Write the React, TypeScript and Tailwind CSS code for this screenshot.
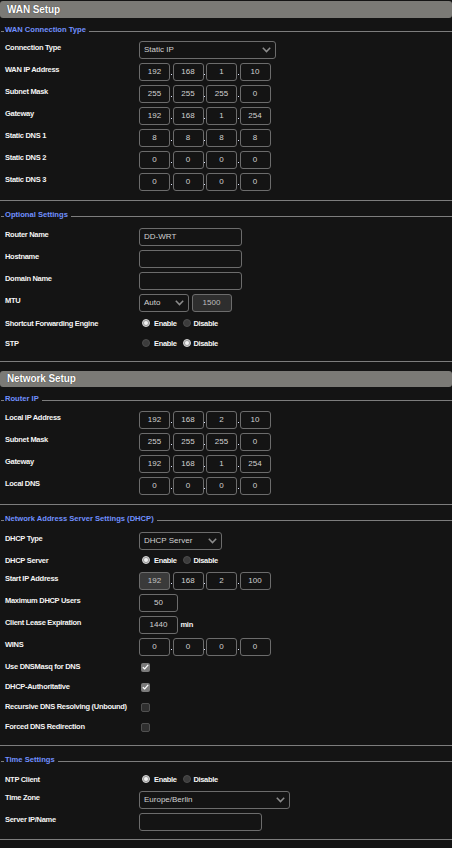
import React from "react";

const LINE = "bg-[#7d7d7d]";

function Header({ title, tall }: { title: string; tall?: boolean }) {
  return (
    <div
      className={`${tall ? "h-[17px]" : "h-[16px]"} bg-[#7b7a76] rounded-[3px] flex items-center pl-[7px]`}
    >
      <span className="text-white font-bold text-[10px] tracking-[-0.1px] leading-none [text-shadow:0_0_1px_rgba(0,0,0,0.7)]">
        {title}
      </span>
    </div>
  );
}

function Legend({ text }: { text: string }) {
  return (
    <div className="flex items-start h-[10px]">
      <div className={`w-[3px] h-px ${LINE} mt-[6px] ml-[1px]`} />
      <span className="ml-[1px] text-[#7190ff] font-bold text-[7.6px] leading-[10px] whitespace-nowrap">
        {text}
      </span>
      <div className={`flex-1 h-px ${LINE} mt-[6px] ml-[3px]`} />
    </div>
  );
}

function Bottom() {
  return <div className={`h-px ${LINE}`} />;
}

const LABEL =
  "w-[139px] shrink-0 pl-[5px] text-[7.5px] leading-[8px] font-bold text-[#f4f4f4] tracking-[-0.3px] whitespace-nowrap";

function Row({ label, children }: { label: string; children?: React.ReactNode }) {
  return (
    <div className="flex h-[22px]">
      <div className={`${LABEL} pt-[2.5px]`}>{label}</div>
      <div className="flex items-start">{children}</div>
    </div>
  );
}

function IP({ v, gray }: { v: string[]; gray?: boolean }) {
  return (
    <div className="flex">
      {v.map((x, i) => (
        <React.Fragment key={i}>
          {i > 0 && (
            <div className="w-[2.5px] h-[18px] flex flex-col justify-end items-center pb-[6px]">
              <div className="w-px h-px bg-[#dfe6ff]" />
            </div>
          )}
          <div
            className={`w-[31px] h-[18px] border border-[#6c6c6c] rounded-[3px] flex items-center justify-center text-[8px] ${
              i === 0 && gray ? "bg-[#3a3a3a] text-[#c4c4c4]" : "text-[#d2d2d2]"
            }`}
          >
            {x}
          </div>
        </React.Fragment>
      ))}
    </div>
  );
}

function Chevron() {
  return (
    <svg width="9" height="6" viewBox="0 0 9 6">
      <path d="M0.8 0.8 L4.5 4.6 L8.2 0.8" stroke="#8c8c8c" strokeWidth="1.5" fill="none" />
    </svg>
  );
}

function Select({ w, text }: { w: string; text: string }) {
  return (
    <div
      className={`${w} h-[18px] border border-[#6c6c6c] rounded-[3px] flex items-center justify-between pl-[4px] pr-[4px]`}
    >
      <span className="text-[8px] text-[#d2d2d2] leading-none">{text}</span>
      <Chevron />
    </div>
  );
}

function Input({ w, text }: { w: string; text?: string }) {
  return (
    <div
      className={`${w} h-[18px] border border-[#6c6c6c] rounded-[3px] flex items-center pl-[4px] text-[8px] text-[#d2d2d2]`}
    >
      {text}
    </div>
  );
}

function Radio({ on }: { on: boolean }) {
  return on ? (
    <div className="w-[8px] h-[8px] rounded-full bg-[#9a9a9a] border border-[#d4d4d4] flex items-center justify-center shrink-0">
      <div className="w-[4px] h-[4px] rounded-full bg-[#f2f2f2]" />
    </div>
  ) : (
    <div className="w-[8px] h-[8px] rounded-full bg-[#3c3c3c] border border-[#4c4c4c] shrink-0" />
  );
}

function RadioPair({ enable }: { enable: boolean }) {
  return (
    <div className="flex items-start">
      <div className="ml-[3px]">
        <Radio on={enable} />
      </div>
      <span className="ml-[4px] mt-[1px] text-[7.5px] leading-[8px] font-bold text-[#f4f4f4] tracking-[-0.35px]">
        Enable
      </span>
      <div className="ml-[6px]">
        <Radio on={!enable} />
      </div>
      <span className="ml-[3px] mt-[1px] text-[7.5px] leading-[8px] font-bold text-[#f4f4f4] tracking-[-0.35px]">
        Disable
      </span>
    </div>
  );
}

function RadioRow({
  label,
  enable,
  variant,
}: {
  label: string;
  enable: boolean;
  variant: "a" | "b" | "c";
}) {
  const h =
    variant === "a"
      ? "h-[20px] pt-[3px]"
      : variant === "b"
      ? "h-[18px] pt-[2px]"
      : "h-[19px] pt-[3px]";
  return (
    <div className={`flex ${h}`}>
      <div className={`${LABEL} pt-[0.5px]`}>{label}</div>
      <RadioPair enable={enable} />
    </div>
  );
}

function Check({ on }: { on: boolean }) {
  return on ? (
    <div className="w-[9px] h-[9px] rounded-[2px] bg-[#7b7b7b] flex items-center justify-center">
      <svg width="7" height="6" viewBox="0 0 7 6">
        <path d="M0.8 3.2 L2.7 5 L6.2 0.9" stroke="#ffffff" strokeWidth="1.2" fill="none" />
      </svg>
    </div>
  ) : (
    <div className="w-[9px] h-[9px] rounded-[2px] bg-[#2f2f2f] border border-[#505050]" />
  );
}

function CheckRow({ label, on }: { label: string; on: boolean }) {
  return (
    <div className="flex h-[20px]">
      <div className={`${LABEL} pt-[3px]`}>{label}</div>
      <div className="ml-[2px] mt-[2.5px]">
        <Check on={on} />
      </div>
    </div>
  );
}

export default function App() {
  return (
    <div className="font-['Liberation_Sans',Arial,sans-serif] w-[452px] h-[848px] bg-[#141414] overflow-hidden pt-px">
      <Header title="WAN Setup" tall />

      <div className="mt-[7px]">
        <Legend text="WAN Connection Type" />
        <div className="pt-[6px] pb-[5px]">
          <Row label="Connection Type">
            <Select w="w-[137px]" text="Static IP" />
          </Row>
          <Row label="WAN IP Address">
            <IP v={["192", "168", "1", "10"]} />
          </Row>
          <Row label="Subnet Mask">
            <IP v={["255", "255", "255", "0"]} />
          </Row>
          <Row label="Gateway">
            <IP v={["192", "168", "1", "254"]} />
          </Row>
          <Row label="Static DNS 1">
            <IP v={["8", "8", "8", "8"]} />
          </Row>
          <Row label="Static DNS 2">
            <IP v={["0", "0", "0", "0"]} />
          </Row>
          <Row label="Static DNS 3">
            <IP v={["0", "0", "0", "0"]} />
          </Row>
        </div>
        <Bottom />
      </div>

      <div className="mt-[9px]">
        <Legend text="Optional Settings" />
        <div className="pt-[8px] pb-[5px]">
          <Row label="Router Name">
            <Input w="w-[103px]" text="DD-WRT" />
          </Row>
          <Row label="Hostname">
            <Input w="w-[103px]" />
          </Row>
          <Row label="Domain Name">
            <Input w="w-[103px]" />
          </Row>
          <Row label="MTU">
            <Select w="w-[50px]" text="Auto" />
            <div className="ml-[2.5px] w-[40px] h-[18px] bg-[#2e2e2e] border border-[#6c6c6c] rounded-[3px] flex items-center justify-center text-[8px] text-[#bdbdbd]">
              1500
            </div>
          </Row>
          <RadioRow label="Shortcut Forwarding Engine" enable variant="a" />
          <RadioRow label="STP" enable={false} variant="a" />
        </div>
        <Bottom />
      </div>

      <div className="mt-[9px]">
        <Header title="Network Setup" />
      </div>

      <div className="mt-[7px]">
        <Legend text="Router IP" />
        <div className="pt-[7px] pb-[5px]">
          <Row label="Local IP Address">
            <IP v={["192", "168", "2", "10"]} />
          </Row>
          <Row label="Subnet Mask">
            <IP v={["255", "255", "255", "0"]} />
          </Row>
          <Row label="Gateway">
            <IP v={["192", "168", "1", "254"]} />
          </Row>
          <Row label="Local DNS">
            <IP v={["0", "0", "0", "0"]} />
          </Row>
        </div>
        <Bottom />
      </div>

      <div className="mt-[9px]">
        <Legend text="Network Address Server Settings (DHCP)" />
        <div className="pt-[8px] pb-[5px]">
          <Row label="DHCP Type">
            <Select w="w-[83px]" text="DHCP Server" />
          </Row>
          <RadioRow label="DHCP Server" enable variant="b" />
          <Row label="Start IP Address">
            <IP v={["192", "168", "2", "100"]} gray />
          </Row>
          <Row label="Maximum DHCP Users">
            <div className="w-[39px] h-[18px] border border-[#6c6c6c] rounded-[3px] flex items-center justify-center text-[8px] text-[#d2d2d2]">
              50
            </div>
          </Row>
          <Row label="Client Lease Expiration">
            <div className="w-[39px] h-[18px] border border-[#6c6c6c] rounded-[3px] flex items-center justify-center text-[8px] text-[#d2d2d2]">
              1440
            </div>
            <span className="ml-[2.5px] h-[18px] flex items-center text-[7.5px] tracking-[-0.3px] font-bold text-[#f4f4f4]">
              min
            </span>
          </Row>
          <Row label="WINS">
            <IP v={["0", "0", "0", "0"]} />
          </Row>
          <CheckRow label="Use DNSMasq for DNS" on />
          <CheckRow label="DHCP-Authoritative" on />
          <CheckRow label="Recursive DNS Resolving (Unbound)" on={false} />
          <CheckRow label="Forced DNS Redirection" on={false} />
        </div>
        <Bottom />
      </div>

      <div className="mt-[9px]">
        <Legend text="Time Settings" />
        <div className="pt-[7px] pb-[4px]">
          <RadioRow label="NTP Client" enable variant="c" />
          <Row label="Time Zone">
            <Select w="w-[151px]" text="Europe/Berlin" />
          </Row>
          <Row label="Server IP/Name">
            <Input w="w-[123px]" />
          </Row>
        </div>
        <Bottom />
      </div>
    </div>
  );
}
